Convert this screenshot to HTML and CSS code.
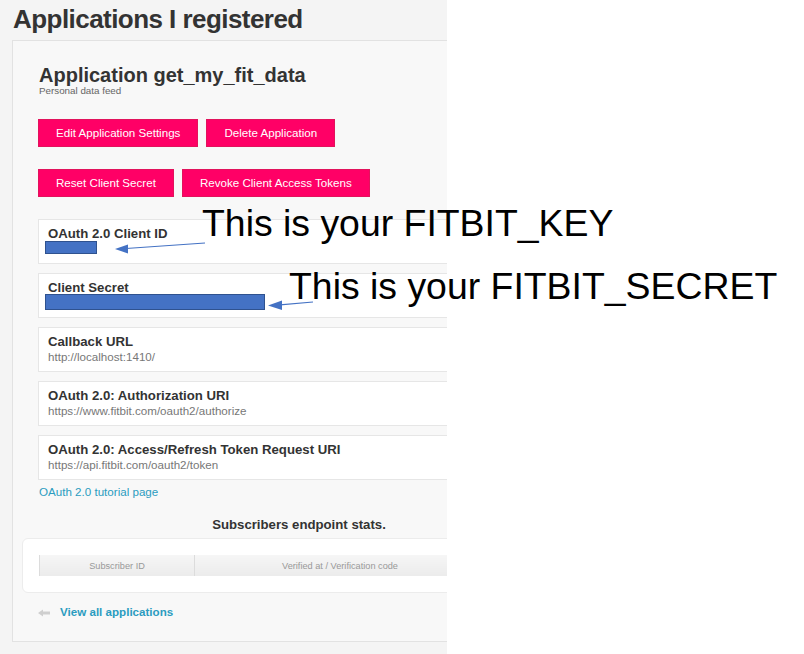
FILE: index.html
```html
<!DOCTYPE html>
<html lang="en">
<head>
<meta charset="utf-8">
<title>Applications I registered</title>
<link rel="stylesheet" href="styles.css">
</head>
<body>
<div class="page">
  <h1 class="page-title">Applications I registered</h1>
  <div class="panel">
    <h2 class="app-name">Application get_my_fit_data</h2>
    <p class="app-desc">Personal data feed</p>

    <div class="btn-row">
      <a class="btn">Edit Application Settings</a>
      <a class="btn">Delete Application</a>
    </div>
    <div class="btn-row">
      <a class="btn">Reset Client Secret</a>
      <a class="btn">Revoke Client Access Tokens</a>
    </div>

    <div class="fields">
      <div class="field">
        <div class="field-label">OAuth 2.0 Client ID</div>
        <div class="field-value"><span class="redact redact-id"></span></div>
      </div>
      <div class="field">
        <div class="field-label">Client Secret</div>
        <div class="field-value"><span class="redact redact-secret"></span></div>
      </div>
      <div class="field">
        <div class="field-label">Callback URL</div>
        <div class="field-value">http://localhost:1410/</div>
      </div>
      <div class="field">
        <div class="field-label">OAuth 2.0: Authorization URI</div>
        <div class="field-value">https://www.fitbit.com/oauth2/authorize</div>
      </div>
      <div class="field">
        <div class="field-label">OAuth 2.0: Access/Refresh Token Request URI</div>
        <div class="field-value">https://api.fitbit.com/oauth2/token</div>
      </div>
    </div>

    <a class="tutorial-link">OAuth 2.0 tutorial page</a>

    <h3 class="stats-title">Subscribers endpoint stats.</h3>
    <div class="stats-box">
      <table class="stats-table">
        <thead>
          <tr>
            <th class="col-id">Subscriber ID</th>
            <th class="col-verified">Verified at / Verification code</th>
            <th class="col-rest"></th>
          </tr>
        </thead>
      </table>
    </div>

    <div class="back-row">
      <svg class="back-icon" width="12" height="8" viewBox="0 0 12 8" aria-hidden="true">
        <path d="M0 4 L5 0.5 L5 2.6 L12 2.6 L12 5.4 L5 5.4 L5 7.5 Z" fill="#cfcfcf"/>
      </svg>
      <a class="back-link">View all applications</a>
    </div>
  </div>
</div>

<div class="annotations">
  <div class="note note-key">This is your FITBIT_KEY</div>
  <div class="note note-secret">This is your FITBIT_SECRET</div>
  <svg class="arrows" width="804" height="654" viewBox="0 0 804 654" aria-hidden="true">
    <line x1="205" y1="243" x2="126" y2="248.5" stroke="#4472c4" stroke-width="1.2"/>
    <polygon points="115,249 128,244.5 128,253.5" fill="#4472c4"/>
    <line x1="313" y1="302" x2="280" y2="304.8" stroke="#4472c4" stroke-width="1.2"/>
    <polygon points="268,305.5 282,300.5 282,310" fill="#4472c4"/>
  </svg>
</div>
</body>
</html>
```

FILE: styles.css
```css
* { box-sizing: border-box; }

html, body {
  margin: 0;
  padding: 0;
  background: #ffffff;
}

body {
  position: relative;
  width: 804px;
  height: 654px;
  overflow: hidden;
  font-family: "Liberation Sans", Arial, Helvetica, sans-serif;
  color: #333;
}

.page {
  width: 447px;
  height: 654px;
  overflow: hidden;
  background: #f4f4f4;
}

.page-title {
  margin: 0;
  padding: 0 0 2px 13px;
  font-size: 26px;
  line-height: 38px;
  font-weight: bold;
  letter-spacing: -0.55px;
  color: #333;
  white-space: nowrap;
}

.panel {
  margin-left: 12px;
  width: 574px;
  background: #f8f8f8;
  border: 1px solid #e2e2e2;
  padding: 24px 25px 22px 25px;
}

.app-name {
  margin: 0 0 0 1px;
  font-size: 20px;
  line-height: 20px;
  font-weight: bold;
  color: #333;
  white-space: nowrap;
}

.app-desc {
  margin: 0 0 0 1px;
  font-size: 9.8px;
  line-height: 12px;
  color: #666;
}

.btn-row {
  display: flex;
  gap: 8px;
  margin-top: 22px;
}

.btn {
  display: block;
  height: 28px;
  padding: 0 17px;
  background: #ff0066;
  border: 1px solid #e2135c;
  color: #fff;
  font-size: 11.6px;
  line-height: 26px;
  white-space: nowrap;
}

.fields {
  display: flex;
  flex-direction: column;
  gap: 9px;
  margin-top: 22px;
}

.field {
  height: 45px;
  background: #fff;
  border: 1px solid #e6e6e6;
  padding: 6px 9px 7px 9px;
}

.field-label {
  font-size: 13.2px;
  line-height: 16px;
  font-weight: bold;
  color: #333;
  white-space: nowrap;
}

.field-value {
  height: 14px;
  font-size: 11.6px;
  line-height: 14px;
  color: #777;
  white-space: nowrap;
}

.redact {
  display: block;
  margin-left: -3px;
  background: #4472c4;
  border: 1px solid #2f528f;
}

.redact-id {
  width: 52px;
  height: 13px;
  margin-top: -1px;
}

.redact-secret {
  width: 220px;
  height: 16px;
  margin-top: -2px;
}

.tutorial-link {
  display: block;
  margin-top: 5px;
  margin-left: 1px;
  font-size: 11.6px;
  line-height: 14px;
  color: #2b9cc0;
}

.stats-title {
  margin: 18px 0 0 0;
  text-align: center;
  font-size: 13.2px;
  line-height: 16px;
  font-weight: bold;
  color: #333;
}

.stats-box {
  margin: 5px -16px 0 -16px;
  background: #fff;
  border: 1px solid #ececec;
  border-radius: 6px;
  padding: 16px;
}

.stats-table {
  width: 100%;
  border-collapse: collapse;
  table-layout: fixed;
}

.stats-table th {
  height: 21px;
  padding: 0;
  font-size: 9.2px;
  font-weight: normal;
  color: #999;
  text-align: center;
  background: linear-gradient(#f6f6f6, #ebebeb);
  border-left: 1px solid #dcdcdc;
  white-space: nowrap;
}

.col-id { width: 155px; }
.col-verified { width: 291px; }

.back-row {
  display: flex;
  align-items: center;
  gap: 10px;
  margin-top: 12px;
}

.back-icon {
  flex: none;
  margin-top: 2px;
}

.back-link {
  font-size: 11.6px;
  line-height: 14px;
  font-weight: bold;
  color: #2b9cc0;
  white-space: nowrap;
}

.annotations {
  position: absolute;
  left: 0;
  top: 0;
  width: 804px;
  height: 654px;
  pointer-events: none;
}

.note {
  position: absolute;
  font-size: 37.4px;
  line-height: 1;
  color: #000;
  white-space: nowrap;
}

.note-key {
  left: 202px;
  top: 205px;
}

.note-secret {
  left: 289px;
  top: 268px;
}

.arrows {
  position: absolute;
  left: 0;
  top: 0;
}
```
